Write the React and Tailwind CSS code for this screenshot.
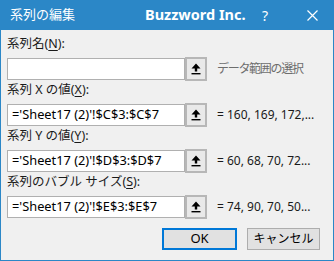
import React from 'react';

const jp = { fontFamily: '"Noto Sans", "Noto Sans CJK JP", sans-serif' };

const rows = [
  { label: ['系列名(', 'N', '):'], value: '', note: 'データ範囲の選択', muted: true },
  { label: ['系列 X の値(', 'X', '):'], value: "='Sheet17 (2)'!$C$3:$C$7", note: '= 160, 169, 172,...' },
  { label: ['系列 Y の値(', 'Y', '):'], value: "='Sheet17 (2)'!$D$3:$D$7", note: '= 60, 68, 70, 72...' },
  { label: ['系列のバブル サイズ(', 'S', '):'], value: "='Sheet17 (2)'!$E$3:$E$7", note: '= 74, 90, 70, 50...' },
];

function UpIcon() {
  return (
    <svg width="10" height="12" viewBox="0 0 10 12">
      <polygon points="5,0.5 9.5,5.5 6.2,5.5 6.2,8.5 3.8,8.5 3.8,5.5 0.5,5.5" fill="#000" />
      <rect x="0.5" y="10" width="9" height="1.4" fill="#000" />
    </svg>
  );
}

function Field({ label, value, note, muted, first }) {
  return (
    <div className={first ? '' : 'mt-px'}>
      <div className="h-4 text-[12.5px] leading-4 text-[#1a1a1a]">
        {label[0]}
        <span className="underline underline-offset-2">{label[1]}</span>
        {label[2]}
      </div>
      <div className="mt-[5px] flex h-6 items-center">
        <div className="flex h-[22px] w-[178px] items-center border border-[#b0b0b0] bg-white pl-[4px] text-[12.8px] text-black">
          {value}
        </div>
        <div className="flex h-6 w-[22px] items-center justify-center border-2 border-[#b7b7b7] bg-[#e9e9e9]">
          <UpIcon />
        </div>
        <div
          className={`ml-[10px] whitespace-nowrap ${
            muted ? 'text-[12px] tracking-[-1.3px] text-[#6d6d6d]' : 'text-[12px] text-[#1a1a1a]'
          }`}
        >
          {note}
        </div>
      </div>
    </div>
  );
}

export default function App() {
  return (
    <div
      className="flex h-[261px] w-[334px] flex-col overflow-hidden border border-t-0 border-[#2b87c7] bg-[#f0f0f0]"
      style={jp}
    >
      {/* Title bar */}
      <div className="-mx-px flex h-[30px] shrink-0 items-center bg-[#2b87c7] text-white">
        <div className="w-[145px] pl-[10px] text-[13px]">系列の編集</div>
        <div className="w-[114px] text-[14.5px] font-bold">Buzzword Inc.</div>
        <div className="w-[12px] text-center text-[14px]">?</div>
        <div className="ml-[35px] flex w-[12px] items-center justify-center">
          <svg width="11" height="11" viewBox="0 0 11 11">
            <path d="M0.5 0.5 L10.5 10.5 M10.5 0.5 L0.5 10.5" stroke="#fff" strokeWidth="1.2" />
          </svg>
        </div>
      </div>

      {/* Body */}
      <div className="flex flex-col px-[6px] pt-[6px]">
        {rows.map((r, i) => (
          <Field key={i} {...r} first={i === 0} />
        ))}

        <div className="mt-[9px] flex justify-end gap-[10px] pr-[7px]">
          <button className="flex h-[22px] w-[75px] items-center justify-center border-2 border-[#0078d7] bg-[#e1e1e1] text-[13px] text-black">
            OK
          </button>
          <button className="flex h-[22px] w-[73px] items-center justify-center border border-[#adadad] bg-[#e1e1e1] text-[12px] text-black">
            キャンセル
          </button>
        </div>
      </div>
    </div>
  );
}
